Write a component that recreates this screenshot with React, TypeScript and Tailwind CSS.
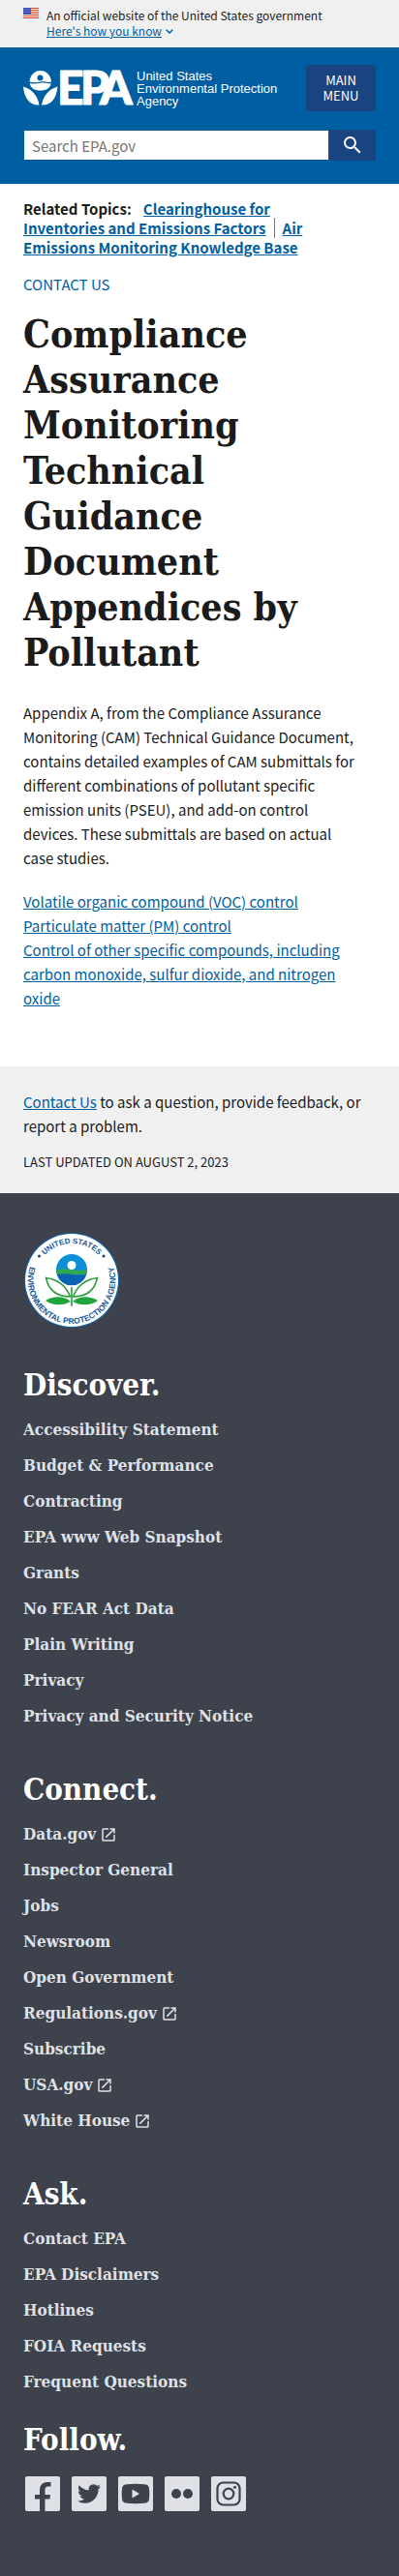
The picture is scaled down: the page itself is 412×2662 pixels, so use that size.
import React from "react";

const discover = [
  "Accessibility Statement",
  "Budget & Performance",
  "Contracting",
  "EPA www Web Snapshot",
  "Grants",
  "No FEAR Act Data",
  "Plain Writing",
  "Privacy",
  "Privacy and Security Notice",
];

const connect = [
  "Data.gov",
  "Inspector General",
  "Jobs",
  "Newsroom",
  "Open Government",
  "Regulations.gov",
  "Subscribe",
  "USA.gov",
  "White House",
];

const external = ["Data.gov", "Regulations.gov", "USA.gov", "White House"];

const ask = [
  "Contact EPA",
  "EPA Disclaimers",
  "Hotlines",
  "FOIA Requests",
  "Frequent Questions",
];

function Flag() {
  return (
    <svg width="16" height="11" viewBox="0 0 16 11" className="mt-2 shrink-0" aria-hidden="true">
      <rect width="16" height="11" fill="#fff" />
      {[0, 2, 4, 6, 8, 10].map((y) => (
        <rect key={y} y={y} width="16" height="1" fill="#db3e1f" />
      ))}
      <rect width="8" height="7" fill="#1e33b1" />
      {[1, 3, 5].map((y) =>
        [1, 3, 5, 7].map((x) => <circle key={`${x}-${y}`} cx={x} cy={y} r="0.5" fill="#fff" />)
      )}
    </svg>
  );
}

function Logo() {
  return (
    <svg width="115" height="36" viewBox="0 0 115 36" className="shrink-0 overflow-visible" aria-hidden="true">
      <g fill="#fff">
        <path d="M6.500 11.500C7 4.500 12 0 17.800 0S28.500 4.500 29 11.500C25 12.800 22 10.600 18 11.500S10 12.600 6.500 11.500Z" />
        <path d="M6.800 13C10 14 14 13.600 18 12.800S25 14 28.800 13C28 18 24 20.500 17.800 20.500S7.500 18 6.800 13Z" />
        <path d="M0 16.500C5 18 14 22 16.500 35.500C7 36 1 29 0 16.500Z" />
        <path d="M35.500 16.500C30.500 18 21.500 22 19 35.500C28.500 36 34.500 29 35.500 16.500Z" />
      </g>
      <circle cx="17.500" cy="7.500" r="3" fill="#005ea2" />
      <text
        x="35 59 79"
        y="35"
        fill="#fff"
        stroke="#fff"
        strokeWidth="1"
        fontFamily="Lato, sans-serif"
        fontWeight="900"
        fontSize="48"
      >
        EPA
      </text>
    </svg>
  );
}

function Seal() {
  return (
    <svg width="100" height="100" viewBox="0 0 100 100" role="img" aria-label="EPA seal">
      <defs>
        <path id="seal-top" d="M12 50A38 38 0 0 1 88 50" />
        <path id="seal-bottom" d="M23 13.500A45.200 45.200 0 1 0 77 13.500" />
      </defs>
      <circle cx="50" cy="50" r="49" fill="#1164ab" />
      <circle cx="50" cy="50" r="48" fill="#fff" />
      <g fill="#1a5a9e" fontFamily="Liberation Sans, Arial, sans-serif" fontWeight="700" fontSize="8.500">
        <text textAnchor="middle" fontSize="8">
          <textPath href="#seal-top" startOffset="50%">UNITED STATES</textPath>
        </text>
        <text textAnchor="middle">
          <textPath href="#seal-bottom" startOffset="50%">ENVIRONMENTAL PROTECTION AGENCY</textPath>
        </text>
      </g>
      <circle cx="16.500" cy="25" r="1.500" fill="#1a4480" />
      <circle cx="83" cy="25" r="1.500" fill="#1a4480" />
      <circle cx="50" cy="39" r="16" fill="#0b8fd8" />
      <path d="M34 39.500Q42 37.500 50 39T66 39L65.300 44H34.700Z" fill="#2fa84f" />
      <path d="M34.700 44Q42 42.500 50 44T65.300 44A16 16 0 0 1 34.700 44Z" fill="#0a62b0" />
      <circle cx="50" cy="34.500" r="4.500" fill="#fff" />
      <g fill="none" stroke="#2c9d3c" strokeWidth="1.600">
        <path d="M23.500 47.500C34 49 44 55 48.500 67C33 67 26 59 23.500 47.500Z" />
        <path d="M76.500 47.500C66 49 56 55 51.500 67C67 67 74 59 76.500 47.500Z" />
        <path d="M50 57V77" />
      </g>
      <path d="M23 71C31 66 42 66 49 72C42 76 31 77 23 71ZM77 71C69 66 58 66 51 72C58 76 69 77 77 71Z" fill="#20a43c" />
    </svg>
  );
}

function ExternalIcon() {
  return (
    <svg width="18" height="18" viewBox="0 0 24 24" className="ml-1 inline-block align-[-4px]" fill="currentColor" aria-hidden="true">
      <path d="M19 19H5V5h7V3H5a2 2 0 0 0-2 2v14a2 2 0 0 0 2 2h14c1.100 0 2-.9 2-2v-7h-2v7zM14 3v2h3.590l-9.830 9.830 1.410 1.410L19 6.410V10h2V3h-7z" />
    </svg>
  );
}

function FooterGroup({ title, items }: { title: string; items: string[] }) {
  return (
    <section>
      <h2 className="text-[31px] leading-[38px] font-bold text-white">{title}</h2>
      <ul className="mt-[15px] flex flex-col gap-3">
        {items.map((item) => (
          <li key={item} className="text-[17px] leading-[25px] font-bold">
            <a href="#">
              {item}
              {external.includes(item) && <ExternalIcon />}
            </a>
          </li>
        ))}
      </ul>
    </section>
  );
}

function SocialLink({ label, children }: { label: string; children: React.ReactNode }) {
  return (
    <a href="#" aria-label={label} className="block size-9 overflow-hidden rounded-xs bg-[#dfe1e6]">
      <svg width="36" height="36" viewBox="0 0 36 36" fill="#3d424d" aria-hidden="true">
        {children}
      </svg>
    </a>
  );
}

const sans = "font-['Noto_Sans_CJK_SC',sans-serif]";
const serif = "font-['DejaVu_Serif_Condensed','DejaVu_Serif',serif]";

export default function App() {
  return (
    <div className={`${sans} bg-white text-[#1b1b1b]`}>
      <section className="flex gap-2 bg-[#f0f0f0] px-6 pt-0 pb-[9px]">
        <Flag />
        <div className="pt-2 text-[12px] leading-4">
          <p>An official website of the United States government</p>
          <button type="button" className="flex items-center text-[#005ea2]">
            <span className="underline">Here's how you know</span>
            <svg width="8" height="5" viewBox="0 0 8 5" className="ml-1" fill="none" stroke="currentColor" strokeWidth="1.500" aria-hidden="true">
              <path d="M0.700 0.700L4 4L7.300 0.700" />
            </svg>
          </button>
        </div>
      </section>

      <header className="bg-[#005ea2] px-6 pt-[18px] pb-6">
        <div className="flex items-center justify-between">
          <a href="#" aria-label="EPA home" className="flex items-center gap-[2px] text-white">
            <Logo />
            <span className="font-['Liberation_Sans',Arial,sans-serif] text-[13px] leading-[13px] whitespace-nowrap">
              United States
              <br />
              Environmental Protection
              <br />
              Agency
            </span>
          </a>
          <button type="button" className="w-[72px] rounded-xs bg-[#1a4480] px-4 py-2 text-[13px] leading-4 text-white">
            MAIN MENU
          </button>
        </div>
        <form className="mt-[19px] flex" onSubmit={(e) => e.preventDefault()}>
          <label htmlFor="search" className="sr-only">Search</label>
          <input
            id="search"
            type="search"
            placeholder="Search EPA.gov"
            className="h-8 min-w-0 flex-1 border border-[#005ea2] bg-white px-2 text-[15px] leading-5 placeholder:text-[#757575]"
          />
          <button type="submit" aria-label="Search" className="flex h-8 w-12 items-center justify-center rounded-r-xs bg-[#1a4480]">
            <svg width="24" height="24" viewBox="0 0 24 24" fill="#fff" aria-hidden="true">
              <path d="M15.500 14h-.79l-.28-.27A6.471 6.471 0 0 0 16 9.500 6.500 6.500 0 1 0 9.500 16c1.610 0 3.090-.59 4.230-1.570l.27.28v.79l5 4.990L20.490 19l-4.990-5zm-6 0C7.010 14 5 11.990 5 9.500S7.010 5 9.500 5 14 7.010 14 9.500 11.990 14 9.500 14z" />
            </svg>
          </button>
        </form>
      </header>

      <main className="px-6 pt-4 pb-[58px]">
        <div className="pr-8 text-[15px] leading-5 font-bold">
          <span className="mr-3">Related Topics:</span>
          <a href="#" className="text-[#005ea2] underline">Clearinghouse for Inventories and Emissions Factors</a>
          <span className="ml-2 border-l border-[#71767a] pl-2">
            <a href="#" className="text-[#005ea2] underline">Air Emissions Monitoring Knowledge Base</a>
          </span>
        </div>
        <p className="mt-4 text-[15px] leading-6">
          <a href="#" className="text-[#005ea2]">CONTACT US</a>
        </p>
        <h1 className={`${serif} mt-4 text-[39px] leading-[47px] font-bold`}>
          Compliance Assurance Monitoring Technical Guidance Document Appendices by Pollutant
        </h1>
        <p className="mt-[26px] pr-4 text-[15px] leading-[25px]">
          Appendix A, from the Compliance Assurance Monitoring (CAM) Technical Guidance Document, contains detailed examples of CAM submittals for different combinations of pollutant specific emission units (PSEU), and add-on control devices. These submittals are based on actual case studies.
        </p>
        <ul className="mt-5 pr-4 text-[15px] leading-[25px] text-[#005ea2]">
          <li><a href="#" className="underline">Volatile organic compound (VOC) control</a></li>
          <li><a href="#" className="underline">Particulate matter (PM) control</a></li>
          <li><a href="#" className="underline">Control of other specific compounds, including carbon monoxide, sulfur dioxide, and nitrogen oxide</a></li>
        </ul>
      </main>

      <section className="bg-[#f0f0f0] px-6 pt-6 pb-[22px]">
        <p className="text-[15px] leading-[25px]">
          <a href="#" className="text-[#005ea2] underline">Contact Us</a> to ask a question, provide feedback, or report a problem.
        </p>
        <p className="mt-[15px] text-[13px] leading-5">LAST UPDATED ON AUGUST 2, 2023</p>
      </section>

      <footer className={`${serif} bg-[#3d424d] px-6 pt-10 pb-[67px] text-[#dfe1e6]`}>
        <Seal />
        <div className="mt-[39px] flex flex-col gap-11">
          <FooterGroup title="Discover." items={discover} />
          <FooterGroup title="Connect." items={connect} />
          <FooterGroup title="Ask." items={ask} />
        </div>
        <h2 className="mt-7 text-[31px] leading-[38px] font-bold text-white">Follow.</h2>
        <div className="mt-[19px] ml-[2px] flex gap-3">
          <SocialLink label="Facebook">
            <path d="M15 36V23.500H10V19H15V14.500C15 9 18 6 23 6H26.500V10.500H24C21.500 10.500 20.500 11.500 20.500 14V19H26L25.500 23.500H20.500V36Z" />
          </SocialLink>
          <SocialLink label="Twitter">
            <path transform="translate(6 6)" d="M23.950 4.570a10 10 0 0 1-2.820.775 4.958 4.958 0 0 0 2.163-2.723c-.951.555-2.005.959-3.127 1.184a4.920 4.920 0 0 0-8.384 4.482C7.690 8.095 4.067 6.130 1.640 3.162a4.822 4.822 0 0 0-.666 2.475c0 1.710.870 3.213 2.188 4.096a4.904 4.904 0 0 1-2.228-.616v.060a4.923 4.923 0 0 0 3.946 4.827 4.996 4.996 0 0 1-2.212.085 4.936 4.936 0 0 0 4.604 3.417 9.867 9.867 0 0 1-6.102 2.105c-.390 0-.779-.023-1.170-.067a13.995 13.995 0 0 0 7.557 2.209c9.053 0 13.998-7.496 13.998-13.985 0-.210 0-.420-.015-.630A9.935 9.935 0 0 0 24 4.590z" />
          </SocialLink>
          <SocialLink label="YouTube">
            <path fillRule="evenodd" d="M7 8.500Q18 7 29 8.500Q31.500 9 32 12Q32.700 18 32 24Q31.500 27 29 27.500Q18 29 7 27.500Q4.500 27 4 24Q3.300 18 4 12Q4.500 9 7 8.500ZM14.500 13.500V22.500L22 18Z" />
          </SocialLink>
          <SocialLink label="Flickr">
            <circle cx="12" cy="18" r="5" />
            <circle cx="24" cy="18" r="5" />
          </SocialLink>
          <SocialLink label="Instagram">
            <g fill="none" stroke="#3d424d" strokeWidth="2.200">
              <rect x="6.500" y="6.500" width="23" height="23" rx="6" />
              <circle cx="18" cy="18" r="5.300" />
            </g>
            <circle cx="24.500" cy="11.300" r="1.500" />
          </SocialLink>
        </div>
      </footer>
    </div>
  );
}
